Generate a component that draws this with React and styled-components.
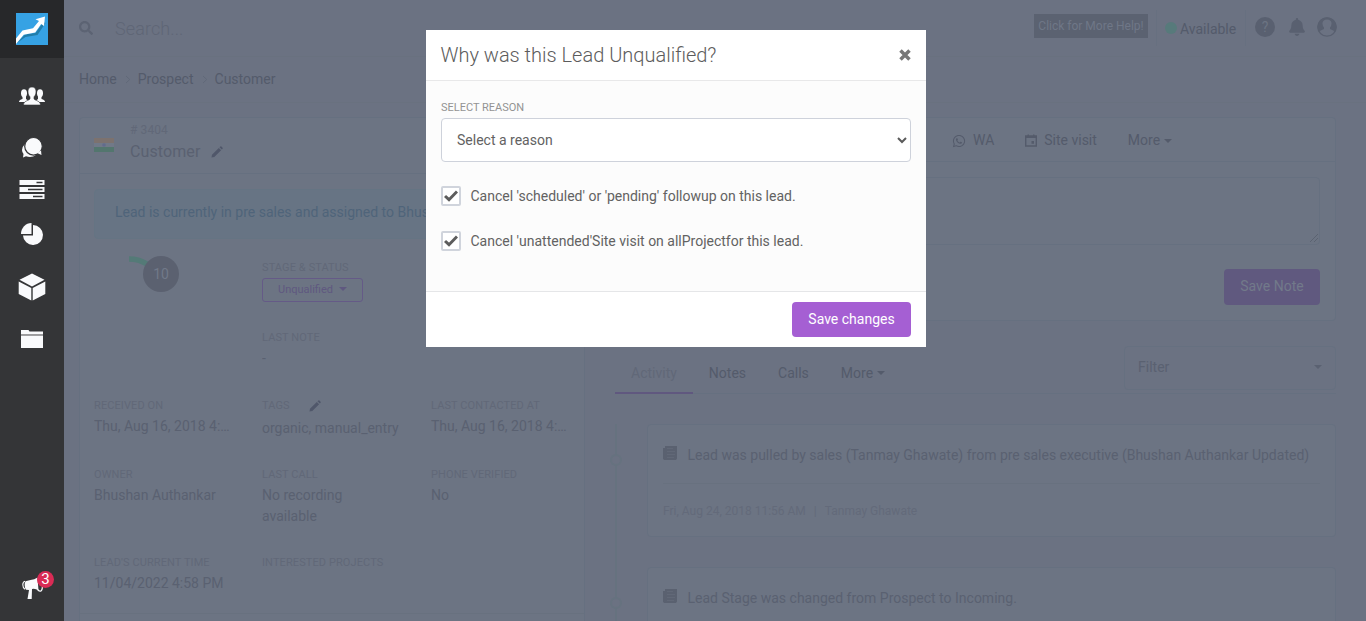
import React from "react";
import styled, { createGlobalStyle, css } from "styled-components";
import { FaWhatsapp, FaSearch, FaBell } from "react-icons/fa";

const c = {
  page: "#6b7282",
  surface: "#6c7483",
  line: "#667080",
  faint: "#616878",
  text: "#5a6171",
  dark: "#545b6b",
  purple: "#60597f",
};

const GlobalStyle = createGlobalStyle`
  * { box-sizing: border-box; }
  html, body, #root { height: 100%; }
  body {
    margin: 0;
    overflow: hidden;
    background: ${c.page};
    font-family: Roboto, "Liberation Sans", sans-serif;
    font-size: 14px;
    line-height: 21px;
    color: ${c.text};
  }
`;

const Shell = styled.div`
  display: flex;
  height: 621px;
  overflow: hidden;
`;

/* ---------- sidebar ---------- */
const Sidebar = styled.nav`
  width: 64px;
  flex: none;
  display: flex;
  flex-direction: column;
  align-items: center;
  background: #343537;
`;
const LogoBox = styled.div`
  width: 64px;
  height: 58px;
  background: #27282a;
  padding: 13px 16px;
`;
const NavItem = styled.div`
  position: relative;
  height: 28px;
  margin-top: ${(p) => p.$gap}px;
  margin-bottom: ${(p) => p.$bottom || 0}px;
  svg { display: block; }
`;
const NavSpacer = styled.div`flex: 1;`;
const Badge = styled.span`
  position: absolute;
  left: 17px;
  top: -2px;
  width: 17px;
  height: 17px;
  border-radius: 50%;
  background: #d92b55;
  color: #fff;
  font-size: 15px;
  line-height: 17px;
  text-align: center;
`;

/* ---------- top bars ---------- */
const Main = styled.main`
  flex: 1;
  min-width: 0;
`;
const TopBar = styled.header`
  height: 57px;
  display: flex;
  align-items: center;
  padding: 0 29px 0 15px;
  border-bottom: 1px solid #69717f;
`;
const Search = styled.div`
  display: flex;
  align-items: center;
  gap: 22px;
  flex: 1;
  font-size: 18px;
  font-weight: 300;
  letter-spacing: 0.1px;
  color: #5f6676;
  svg { color: #5c6373; }
`;
const HelpButton = styled.div`
  height: 24px;
  width: 114px;
  margin: -4px 8px 0 0;
  background: #5b6271;
  color: #6f7787;
  font-size: 12px;
  line-height: 24px;
  text-align: center;
`;
const Status = styled.div`
  display: flex;
  align-items: center;
  gap: 3px;
  height: 36px;
  width: 90px;
  padding: 2px 0 0 8px;
  border: solid #677080;
  border-width: 0 1px;
  color: ${c.dark};
`;
const Dot = styled.i`
  width: 12px;
  height: 12px;
  margin-top: -2px;
  border-radius: 50%;
  background: #577a7b;
`;
const TopIcons = styled.div`
  display: flex;
  align-items: center;
  margin: -3px 0 0 9px;
  color: #596070;
  gap: 10px;
  svg { display: block; }
`;
const HelpDot = styled.div`
  width: 20px;
  height: 20px;
  border-radius: 50%;
  background: #596070;
  color: ${c.surface};
  font-size: 14px;
  line-height: 20px;
  text-align: center;
`;
const BellWrap = styled.div`padding: 0 1px 0 3px;`;
const Crumbs = styled.div`
  display: flex;
  align-items: center;
  height: 46px;
  padding: 0 15px;
  color: ${c.dark};
  border-bottom: 1px solid #69717f;
  svg { margin: 0 7px 0 8px; }
`;

/* ---------- layout ---------- */
const Content = styled.div`
  display: flex;
  align-items: flex-start;
  gap: 30px;
  padding: 14px 30px 0 15px;
`;
const Card = styled.section`
  background: ${c.surface};
  border: 1px solid ${c.line};
  border-radius: 4px;
`;
const LeadCard = styled(Card)`
  width: 506px;
  height: 560px;
  flex: none;
`;
const RightColumn = styled.div`
  flex: 1;
  min-width: 0;
`;

/* ---------- lead card ---------- */
const LeadHead = styled.div`
  display: flex;
  height: 56px;
  padding: 1px 14px 0;
  border-bottom: 1px solid ${c.line};
`;
const Flag = styled.svg`
  margin: 19px 16px 0 0;
`;
const LeadId = styled.div`
  font-size: 12px;
  line-height: 22px;
  color: ${c.faint};
  letter-spacing: 0.1px;
`;
const LeadName = styled.div`
  display: flex;
  align-items: center;
  gap: 11px;
  font-size: 16px;
  line-height: 21px;
  letter-spacing: 0.1px;
`;
const Alert = styled.div`
  margin: 15px 14px 0;
  height: 50px;
  padding: 12px 20px 0;
  border: 1px solid #657483;
  border-radius: 4px;
  background: #677484;
  color: #4f647a;
  line-height: 20px;
  white-space: nowrap;
  overflow: hidden;
`;
const Fields = styled.div`
  display: grid;
  grid-template-columns: 168px 169px 150px;
  padding: 18px 14px 0;
  grid-template-rows: 70px 68px 69px 88px 61px;
`;
const Field = styled.div`
  min-width: 0;
  padding-right: ${(p) => p.$pad ?? 30}px;
`;
const Label = styled.div`
  display: flex;
  align-items: center;
  gap: 19px;
  font-size: 11px;
  line-height: 21px;
  height: 21px;
  text-transform: uppercase;
  color: ${c.faint};
  white-space: nowrap;
  letter-spacing: 0.1px;
`;
const Value = styled.div`
  line-height: 21px;
  margin-top: ${(p) => p.$top || 0}px;
  ${(p) => !p.$wrap && css`
    white-space: nowrap;
    overflow: hidden;
    text-overflow: ellipsis;
  `}
`;
const ScoreCell = styled.div`
  display: flex;
  padding-left: 35px;
  margin-top: -1px;
  grid-row: span 2;
`;
const Score = styled.div`
  width: 36px;
  height: 36px;
  margin-left: -5px;
  border-radius: 50%;
  background: #5b6170;
  color: #717989;
  line-height: 36px;
  text-align: center;
  z-index: 1;
`;
const StageButton = styled.div`
  display: flex;
  align-items: center;
  justify-content: center;
  gap: 6px;
  width: 101px;
  height: 24px;
  border: 1px solid #655a87;
  border-radius: 3px;
  color: #5f5880;
  font-size: 11px;
  padding-bottom: 2px;
`;
const Caret = styled.i`
  display: inline-block;
  border: solid transparent;
  border-width: 4px 4px 0;
  border-top-color: currentColor;
`;
const CardRule = styled.div`
  border-top: 1px solid #68717f;
`;

/* ---------- note card ---------- */
const NoteCard = styled(Card)`
  height: 204px;
`;
const ActionTabs = styled.div`
  display: flex;
  height: 44px;
  align-items: center;
  padding: 2px 0 0 336px;
  border-bottom: 1px solid ${c.line};
  color: ${c.dark};
`;
const Action = styled.div`
  display: flex;
  align-items: center;
  gap: ${(p) => p.$gap}px;
  margin-right: 31px;
`;
const NoteBox = styled.div`
  display: flex;
  align-items: flex-end;
  justify-content: flex-end;
  height: 68px;
  margin: 15px 15px 0;
  padding: 2px 1px;
  border: 1px solid ${c.line};
  border-radius: 4px;
`;
const NoteActions = styled.div`
  display: flex;
  justify-content: flex-end;
  padding: 24px 15px 0;
`;
const SaveNote = styled.div`
  width: 96px;
  height: 36px;
  border-radius: 4px;
  background: ${c.purple};
  color: #727a8a;
  text-align: center;
  line-height: 34px;
`;

/* ---------- activity ---------- */
const TabBar = styled.div`
  display: flex;
  justify-content: space-between;
  height: 48px;
  margin-top: 25px;
  border-bottom: 1px solid ${c.line};
`;
const TabList = styled.div`display: flex;`;
const Tab = styled.div`
  display: flex;
  align-items: center;
  gap: 4px;
  height: 48px;
  padding: 8px 16px 0;
  color: ${(p) => (p.$active ? c.faint : c.dark)};
  border-bottom: 2px solid ${(p) => (p.$active ? "#60587f" : "transparent")};
`;
const FilterBox = styled.div`
  display: flex;
  align-items: center;
  justify-content: space-between;
  width: 212px;
  height: 44px;
  padding: 0 13px 2px;
  border: 1px solid ${c.line};
  border-radius: 4px;
`;
const Timeline = styled.div`
  margin-top: 30px;
  border-left: 2px solid #66727f;
`;
const Entry = styled.div`
  display: flex;
  align-items: flex-start;
  padding-bottom: 30px;
`;
const Node = styled.i`
  width: 12px;
  height: 12px;
  flex: none;
  margin: 30px 23px 0 -7px;
  border: 2px solid #66727f;
  border-radius: 50%;
  background: ${c.page};
`;
const EntryCard = styled(Card)`
  flex: 1;
  min-width: 0;
  height: 113px;
  margin-left: 2px;
  padding: 0 15px;
`;
const EntryTitle = styled.div`
  display: flex;
  align-items: center;
  gap: 9.5px;
  height: 59px;
  padding-top: 2px;
  border-bottom: 1px solid #68717f;
  white-space: nowrap;
  svg { margin-top: -4px; flex: none; }
`;
const EntryMeta = styled.div`
  display: flex;
  gap: 8px;
  padding-top: 17px;
  font-size: 12px;
  color: #636a7a;
`;

/* ---------- dialog ---------- */
const DialogLayer = styled.div`
  position: fixed;
  inset: 0;
  display: flex;
  justify-content: center;
  align-items: flex-start;
  padding: 30px 14px 0 0;
  z-index: 10;
`;
const Dialog = styled.div`
  width: 500px;
  height: 317px;
  background: #fff;
  color: #626262;
`;
const DialogHead = styled.div`
  display: flex;
  justify-content: space-between;
  align-items: center;
  height: 51px;
  padding: 0 15px 0 14.5px;
  border-bottom: 1px solid #e8e8e9;
  color: #5c5c5c;
`;
const DialogTitle = styled.h1`
  margin: 0;
  font-size: 20px;
  font-weight: 300;
`;
const DialogBody = styled.div`
  height: 211px;
  padding: 16px 15px 0;
  background: #fcfcfc;
  border-bottom: 1px solid #e5e6e8;
`;
const DialogLabel = styled(Label)`
  color: #939393;
  letter-spacing: 0;
`;
const SelectBox = styled.div`
  display: flex;
  align-items: center;
  justify-content: space-between;
  height: 44px;
  padding: 0 3px 0 15px;
  background: #fff;
  border: 1px solid #ced2db;
  border-radius: 4px;
`;
const CheckRow = styled.div`
  display: flex;
  align-items: center;
  gap: 9.5px;
  height: 20px;
  margin-top: ${(p) => p.$top}px;
`;
const CheckBox = styled.span`
  display: flex;
  align-items: center;
  justify-content: center;
  width: 20px;
  height: 20px;
  background: #fff;
  border: 2px solid #d0d4dc;
  border-radius: 2px;
`;
const DialogFoot = styled.div`
  display: flex;
  justify-content: flex-end;
  padding: 10px 15px 0;
`;
const SaveButton = styled.div`
  width: 119px;
  height: 35px;
  border-radius: 4px;
  background: #a55fd3;
  color: #fff;
  line-height: 34px;
  text-align: center;
`;

const Pencil = () => (
  <svg width="12" height="12" viewBox="0 0 12 12" fill="#50576a">
    <path d="M.5 11.500 1 8.700 7.800 2l2.300 2.200-6.800 6.700zM8.500 1.300 9.400.5q.5-.4 1 0l1.200 1.200q.4.5 0 1l-.8.8z" />
  </svg>
);
const Papers = () => (
  <svg width="15" height="14" viewBox="0 0 15 14">
    <path d="M2 0h12v12.500L13 14H1.300L0 13V2h2z" fill="#5a6170" />
    <path d="M4 2.500h6M4 5.500h8M4 8.500h8M4 11.500h7" stroke="#616877" />
  </svg>
);
const Chevron = () => (
  <svg width="6" height="9" viewBox="0 0 6 9" fill="none" stroke="#616979">
    <path d="m1 1 3.700 3.500L1 8" />
  </svg>
);

const NavIcon = {
  people: (
    <svg width="28" height="28" viewBox="0 0 28 28" fill="#f9fafc">
      <ellipse cx="6" cy="9.300" rx="3" ry="4" />
      <ellipse cx="22" cy="9.300" rx="3" ry="4" />
      <path d="M4.500 12h3.500v3l2 1.500-3 1.500H1q0-2 3.500-3zM23.500 12H20v3l-2 1.500 3 1.500h6q0-2-3.500-3z" />
      <path d="M14 3c3 0 4.200 2 4 5-.2 2.500-1 4-2 4.800V15c1 1.500 6.500 1.800 6.500 6h-17c0-4.200 5.500-4.500 6.500-6v-2.200c-1-.8-1.800-2.300-2-4.800-.2-3 1-5 4-5z" stroke="#343537" strokeWidth=".6" />
    </svg>
  ),
  chat: (
    <svg width="28" height="28" viewBox="0 0 28 28" fill="#f9fafc">
      <path d="M4 16a8 7.500 0 0 1 8-7.500 8 7 0 0 1 0 14.500q-2 0-4-.8L5 23.500l.5-3.500Q4 18 4 16z" />
      <circle cx="15.500" cy="12.300" r="8.800" stroke="#343537" strokeWidth="1.200" />
      <path d="m19 19 4.500 2-.5-4.500z" />
    </svg>
  ),
  list: (
    <svg width="26" height="28" viewBox="0 0 26 28">
      <path d="M.5 4h25v5H.5zM.5 11h25v5H.5zM.5 18h25v5H.5z" fill="#f9fafc" />
      <path d="M17.500 6.500h6M9 13.500h14.500M14 20.500h9.500" stroke="#343537" strokeWidth="1.300" />
    </svg>
  ),
  pie: (
    <svg width="24" height="28" viewBox="0 0 24 28" fill="#f9fafc">
      <path d="M13 14V5a10 10 0 1 1-10 10.500h10z" />
      <path d="M11.500 14H1A10.500 11 0 0 1 11.500 3z" />
    </svg>
  ),
  cube: (
    <svg width="28" height="28" viewBox="0 0 28 28" fill="#f9fafc">
      <path d="M14 .5l12.500 6.300L14 13.500 1.500 6.800zM.7 8.500l12.600 6.500V27.500L.7 21zM27.300 8.500l-12.600 6.500V27.500l12.600-6.500z" />
    </svg>
  ),
  folder: (
    <svg width="22" height="28" viewBox="0 0 22 28" fill="#f9fafc">
      <path d="M0 5h7.500l1 1.500H22v2.700H0zM0 10.500h22V23H0z" />
      <path d="M0 9.200h22v1.300H0z" fill="#a9a9ab" />
    </svg>
  ),
  horn: (
    <svg width="24" height="28" viewBox="0 0 24 28" fill="#f9fafc">
      <path d="M5.500 8.200 10.500 7q4-.5 7-2.500l1 13q-3.500-2.500-6.500-1.500l-.3 10H7.500l1.500-9-3-.2Q3.500 12 5.500 8.200z" />
      <path d="M5 8.200Q2.800 8.800 2.800 11.800T5 16.200" fill="none" stroke="#f9fafc" strokeWidth="1.100" />
      <path d="M17.500 16.500q4.500 4.500 5-3" fill="none" stroke="#f9fafc" strokeWidth="1.300" />
    </svg>
  ),
};

const Logo = () => (
  <svg width="32" height="32" viewBox="0 0 32 32">
    <path d="M0 0h32v32H0z" fill="#36a2e4" />
    <path d="m1 30 8-8.500 10.500-1.500 8-11 2 1-8 12-12 2z" fill="#217da9" />
    <path d="M0 31v-5.500l6.500-8L17 15.300l6-7.300-3.500-1.700L29 3.500 28 13l-2.800-2-6 8.500-11.500 2.300z" fill="#fff" />
  </svg>
);

const activity = [
  {
    text: "Lead was pulled by sales (Tanmay Ghawate) from pre sales executive (Bhushan Authankar Updated)",
    date: "Fri, Aug 24, 2018 11:56 AM",
    by: "Tanmay Ghawate",
  },
  {
    text: "Lead Stage was changed from Prospect to Incoming.",
  },
];

export default function App() {
  return (
    <>
      <GlobalStyle />
      <Shell>
        <Sidebar>
          <LogoBox><Logo /></LogoBox>
          <NavItem $gap={26}>{NavIcon.people}</NavItem>
          <NavItem $gap={22}>{NavIcon.chat}</NavItem>
          <NavItem $gap={14}>{NavIcon.list}</NavItem>
          <NavItem $gap={16}>{NavIcon.pie}</NavItem>
          <NavItem $gap={25}>{NavIcon.cube}</NavItem>
          <NavItem $gap={24}>{NavIcon.folder}</NavItem>
          <NavSpacer />
          <NavItem $gap={0} $bottom={20}>
            {NavIcon.horn}
            <Badge>3</Badge>
          </NavItem>
        </Sidebar>

        <Main>
          <TopBar>
            <Search><FaSearch size={14} />Search...</Search>
            <HelpButton>Click for More Help!</HelpButton>
            <Status><Dot />Available</Status>
            <TopIcons>
              <HelpDot>?</HelpDot>
              <BellWrap><FaBell size={18} /></BellWrap>
              <svg width="20" height="20" viewBox="0 0 20 20">
                <circle cx="10" cy="10" r="9.200" fill="none" stroke="#596070" strokeWidth="1.200" />
                <path fillRule="evenodd" d="M10 .5a9.500 9.500 0 0 1 8 14.500q-1-1.500-5-3v-1.500q1.700-1.800 1.500-4.500Q14 2.500 10 2.500T5.500 6Q5.300 8.700 7 10.500V12q-4 1.500-5 3A9.500 9.500 0 0 1 10 .5z" fill="#596070" />
              </svg>
            </TopIcons>
          </TopBar>
          <Crumbs>Home<Chevron />Prospect<Chevron />Customer</Crumbs>

          <Content>
            <LeadCard>
              <LeadHead>
                <Flag width="20" height="14" viewBox="0 0 20 14">
                  <path d="M0 0h20v5H0z" fill="#7c726f" />
                  <path d="M0 5h20v4H0z" fill="#717988" />
                  <path d="M0 9h20v5H0z" fill="#53766e" />
                  <circle cx="10" cy="7" r="1.800" fill="#626b8c" />
                </Flag>
                <div>
                  <LeadId># 3404</LeadId>
                  <LeadName>Customer <Pencil /></LeadName>
                </div>
              </LeadHead>
              <Alert>Lead is currently in pre sales and assigned to Bhushan Authankar</Alert>
              <Fields>
                <ScoreCell>
                  <svg width="19" height="10" viewBox="0 0 19 10">
                    <path d="M0 3q10 0 18 5" fill="none" stroke="#547a77" strokeWidth="5.500" />
                  </svg>
                  <Score>10</Score>
                </ScoreCell>
                <Field>
                  <Label>Stage &amp; Status</Label>
                  <StageButton>Unqualified <Caret /></StageButton>
                </Field>
                <Field />
                <Field><Label>Last Note</Label><Value>-</Value></Field>
                <Field />
                <Field><Label>Received on</Label><Value>Thu, Aug 16, 2018 4:58 PM</Value></Field>
                <Field $pad={0}><Label>Tags <Pencil /></Label><Value $top={2}>organic, manual_entry</Value></Field>
                <Field $pad={12}><Label>Last contacted at</Label><Value>Thu, Aug 16, 2018 4:58 PM</Value></Field>
                <Field><Label>Owner</Label><Value>Bhushan Authankar</Value></Field>
                <Field $pad={50}><Label>Last call</Label><Value $wrap>No recording available</Value></Field>
                <Field><Label>Phone verified</Label><Value>No</Value></Field>
                <Field><Label>Lead's current time</Label><Value>11/04/2022 4:58 PM</Value></Field>
                <Field><Label>Interested projects</Label></Field>
              </Fields>
              <CardRule />
            </LeadCard>

            <RightColumn>
              <NoteCard>
                <ActionTabs>
                  <Action $gap={7}><FaWhatsapp size={14} />WA</Action>
                  <Action $gap={7}>
                    <svg width="12" height="13" viewBox="0 0 12 13">
                      <path d="M.7 2h10.600v10H.7z" fill="none" stroke={c.dark} strokeWidth="1.400" />
                      <path d="M.5 2h11v2H.5zM2.500.5H4V2H2.500zM8 .5h1.500V2H8zM6.500 7H9v2.700H6.500z" fill={c.dark} />
                    </svg>
                    Site visit
                  </Action>
                  <Action $gap={4}>More<Caret /></Action>
                </ActionTabs>
                <NoteBox>
                  <svg width="8" height="8" viewBox="0 0 8 8" stroke="#555c6a">
                    <path d="M0 8 8 0M4 8l4-4" strokeWidth=".7" />
                  </svg>
                </NoteBox>
                <NoteActions><SaveNote>Save Note</SaveNote></NoteActions>
              </NoteCard>

              <TabBar>
                <TabList>
                  <Tab $active>Activity</Tab>
                  <Tab>Notes</Tab>
                  <Tab>Calls</Tab>
                  <Tab>More<Caret /></Tab>
                </TabList>
                <FilterBox>Filter<Caret /></FilterBox>
              </TabBar>

              <Timeline>
                {activity.map((a) => (
                  <Entry key={a.text}>
                    <Node />
                    <EntryCard>
                      <EntryTitle><Papers />{a.text}</EntryTitle>
                      {a.date && (
                        <EntryMeta><span>{a.date}</span><span>|</span><span>{a.by}</span></EntryMeta>
                      )}
                    </EntryCard>
                  </Entry>
                ))}
              </Timeline>
            </RightColumn>
          </Content>
        </Main>
      </Shell>

      <DialogLayer>
        <Dialog role="dialog">
          <DialogHead>
            <DialogTitle>Why was this Lead Unqualified?</DialogTitle>
            <svg width="12" height="12" viewBox="0 0 12 12" stroke="#777" strokeWidth="3.500">
              <path d="m1.500 1.500 9 9M10.500 1.500l-9 9" />
            </svg>
          </DialogHead>
          <DialogBody>
            <DialogLabel>Select reason</DialogLabel>
            <SelectBox>
              Select a reason
              <svg width="10" height="7" viewBox="0 0 10 7" fill="none" stroke="#5a5a5a" strokeWidth="2">
                <path d="m1 1 4 4 4-4" />
              </svg>
            </SelectBox>
            {["Cancel 'scheduled' or 'pending' followup on this lead.", "Cancel 'unattended'Site visit on allProjectfor this lead."].map((t, i) => (
              <CheckRow key={t} $top={i ? 25 : 24}>
                <CheckBox>
                  <svg width="14" height="12" viewBox="0 0 14 12" fill="none" stroke="#5c5c5c" strokeWidth="3">
                    <path d="m1 6 4 3.700L13 1.500" />
                  </svg>
                </CheckBox>
                {t}
              </CheckRow>
            ))}
          </DialogBody>
          <DialogFoot><SaveButton>Save changes</SaveButton></DialogFoot>
        </Dialog>
      </DialogLayer>
    </>
  );
}
